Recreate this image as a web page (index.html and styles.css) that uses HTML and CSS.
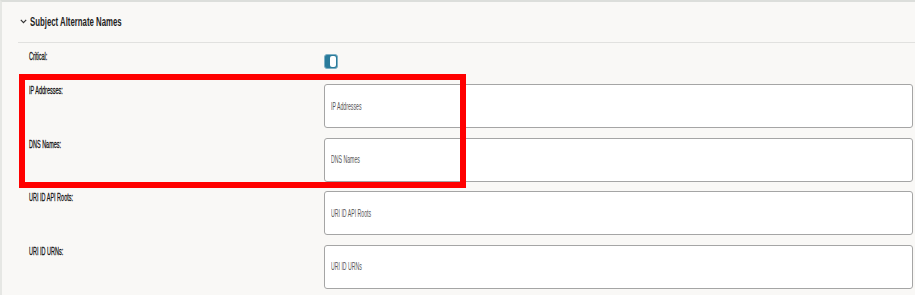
FILE: index.html
```html
<!DOCTYPE html>
<html lang="en">
<head>
    <meta charset="UTF-8">
    <meta name="viewport" content="width=device-width, initial-scale=1.0">
    <title>Subject Alternate Names</title>
    <link rel="stylesheet" href="styles.css">
</head>
<body>
    <div class="panel">
        <div class="section-header">
            <svg class="chevron" width="7" height="5" viewBox="0 0 7 5">
                <path d="M0.8 0.8 L3.5 3.6 L6.2 0.8" fill="none" stroke="#333" stroke-width="1.2"/>
            </svg>
            <span class="section-title">Subject Alternate Names</span>
        </div>
        <div class="form">
            <div class="row row-critical">
                <div class="label"><span>Critical:</span></div>
                <div class="toggle"><span></span></div>
            </div>
            <div class="row">
                <div class="label"><span>IP Addresses:</span></div>
                <div class="field"><span>IP Addresses</span></div>
            </div>
            <div class="row">
                <div class="label"><span>DNS Names:</span></div>
                <div class="field"><span>DNS Names</span></div>
            </div>
            <div class="row">
                <div class="label"><span>URI ID API Roots:</span></div>
                <div class="field"><span>URI ID API Roots</span></div>
            </div>
            <div class="row">
                <div class="label"><span>URI ID URNs:</span></div>
                <div class="field"><span>URI ID URNs</span></div>
            </div>
        </div>
        <div class="highlight"></div>
    </div>
</body>
</html>
```

FILE: styles.css
```css
* {
    margin: 0;
    padding: 0;
    box-sizing: border-box;
}
body {
    font-family: "Liberation Sans", Arial, sans-serif;
    background-color: #f9f8f6;
    width: 915px;
    height: 295px;
    overflow: hidden;
}
.panel {
    position: relative;
    height: 295px;
    border-top: 2px solid #dcdedb;
    border-left: 2px solid #e6e7e4;
}
.section-header {
    display: flex;
    align-items: center;
    height: 41px;
    margin-left: 16px;
    border-bottom: 1px solid #e1e1df;
}
.chevron {
    margin-left: 2px;
    margin-right: 3px;
    margin-top: -1px;
}
.section-title {
    display: inline-block;
    font-size: 12px;
    font-weight: bold;
    color: #1f1f1f;
    transform: scaleX(0.65);
    transform-origin: left center;
    white-space: nowrap;
}
.form {
    padding: 7px 2px 0 27px;
}
.row {
    display: flex;
    height: 44px;
}
.row + .row {
    margin-top: 9.5px;
}
.row-critical {
    height: 24px;
}
.row-critical + .row {
    margin-top: 10px;
}
.label {
    width: 295px;
    font-size: 11px;
    line-height: 13px;
    color: #111;
    white-space: nowrap;
}
.label span {
    display: inline-block;
    transform: scaleX(0.5);
    transform-origin: left center;
    -webkit-text-stroke: 0.3px #111;
}
.toggle {
    position: relative;
    width: 14px;
    height: 15px;
    margin-top: 4px;
    background-color: #2a7b9b;
    border: 1px solid #7eb0c4;
    border-radius: 3px;
}
.toggle span {
    position: absolute;
    top: 1px;
    right: 1px;
    width: 6px;
    height: 11px;
    background-color: #fff;
    border-radius: 2px;
}
.field {
    flex: 1;
    display: flex;
    align-items: center;
    padding-left: 6px;
    background-color: #fff;
    border: 1px solid #a5a5a5;
    border-radius: 3px;
    font-size: 10px;
    color: #555;
    white-space: nowrap;
}
.field span {
    display: inline-block;
    transform: scaleX(0.52);
    transform-origin: left center;
}
.highlight {
    position: absolute;
    left: 17px;
    top: 72px;
    width: 447px;
    height: 114px;
    border: 6px solid #ff0000;
}
```
